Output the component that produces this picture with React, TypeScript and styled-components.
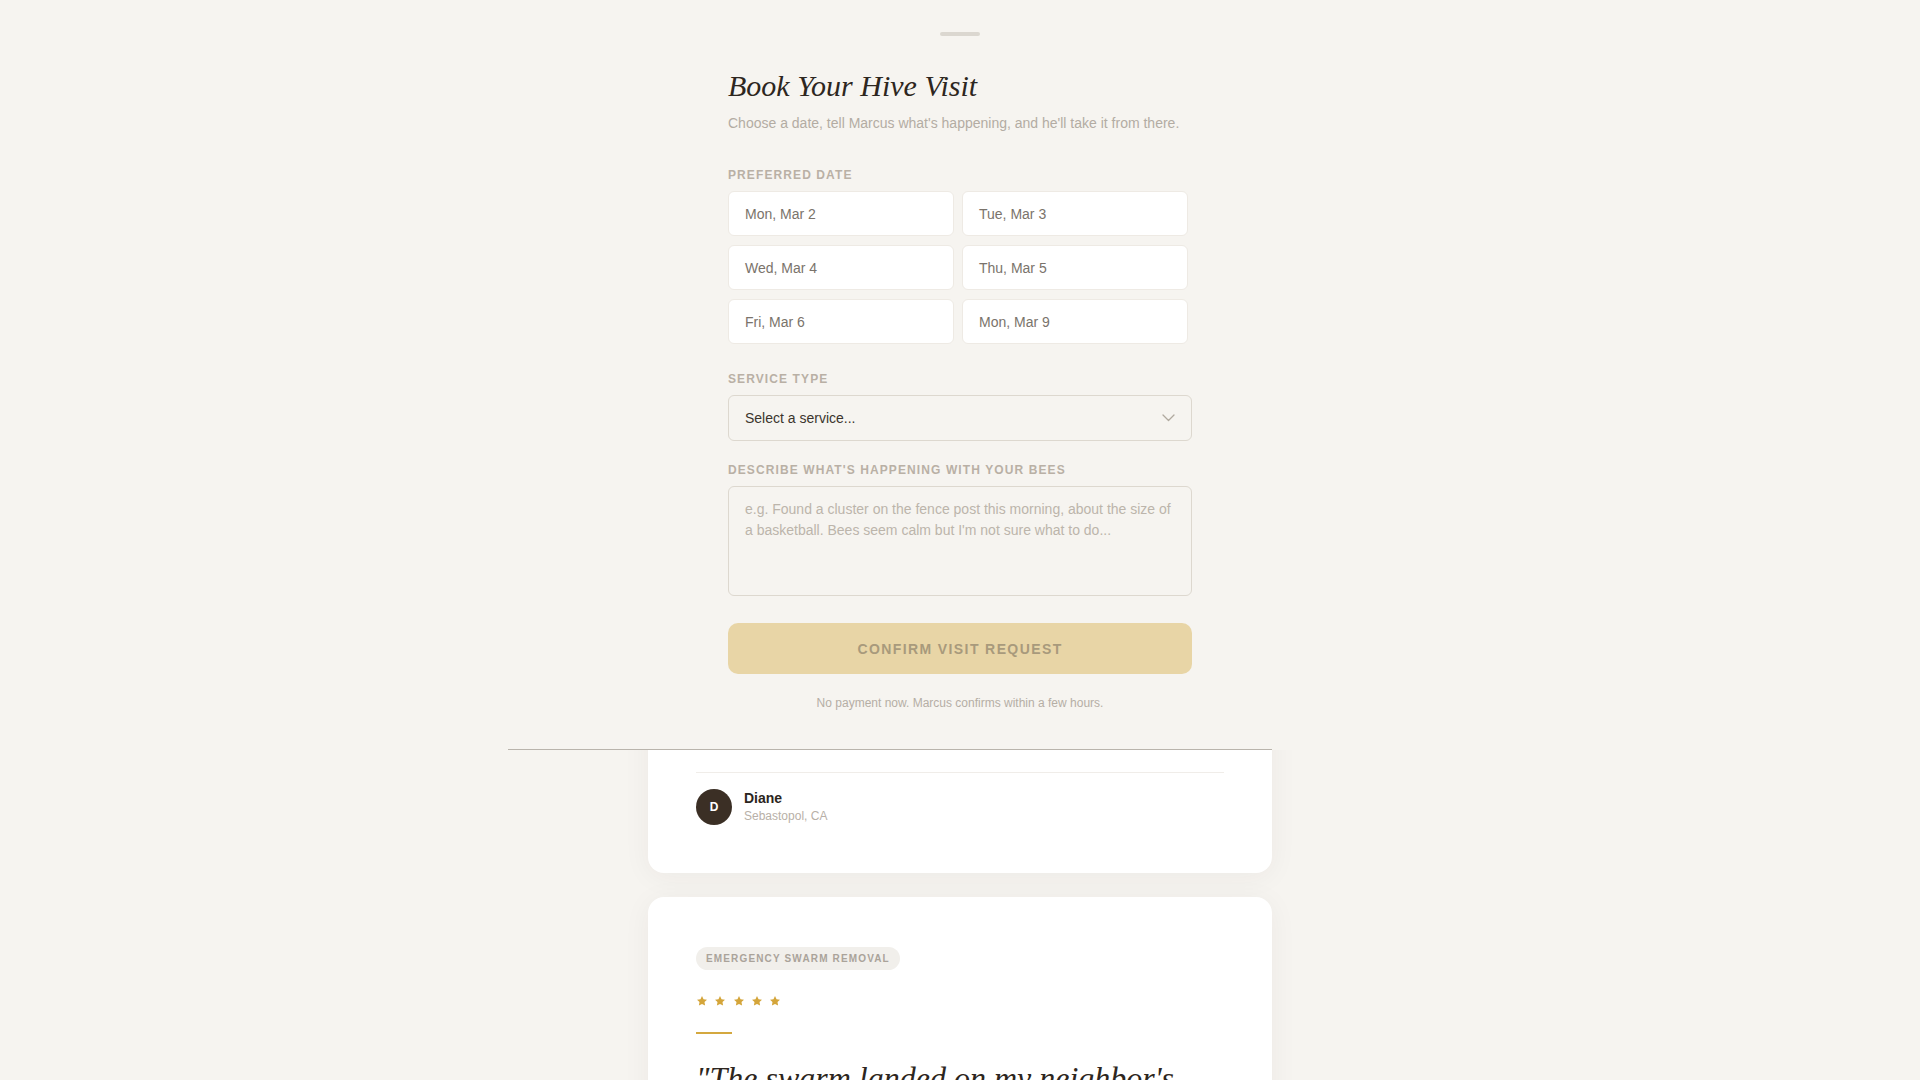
import React, { useState } from 'react';
import styled, { createGlobalStyle } from 'styled-components';

const GlobalStyle = createGlobalStyle`
	* { box-sizing: border-box; }
	html, body {
		margin: 0;
		padding: 0;
		background: #f6f4f0;
		font-family: 'Liberation Sans', Arial, sans-serif;
		color: #2d2620;
	}
	body { overflow: hidden; }
`;

const Page = styled.div`
	position: relative;
	width: 100%;
	height: 1080px;
	overflow: hidden;
`;

// review list behind the booking sheet
const ReviewsColumn = styled.div`
	width: 624px;
	margin: 0 auto;
	padding-top: 457px;
	display: flex;
	flex-direction: column;
	gap: 24px;
`;

const ReviewCard = styled.div`
	background: #ffffff;
	border-radius: 16px;
	padding: 50px 48px 48px;
	box-shadow: 0 4px 28px rgba(60, 45, 30, 0.05);
	display: flex;
	flex-direction: column;
	align-items: flex-start;
`;

const ServiceTag = styled.span`
	display: inline-flex;
	align-items: center;
	height: 23px;
	padding: 0 10px;
	border-radius: 12px;
	background: #f1efeb;
	color: #aaa39a;
	font-size: 10px;
	font-weight: 700;
	letter-spacing: 1.15px;
`;

const Stars = styled.div`
	display: flex;
	gap: 6.3px;
	margin-top: 25px;
	height: 12px;
	color: #d4a53a;
`;

const GoldRule = styled.div`
	width: 36px;
	height: 2px;
	background: #d4a83f;
	margin-top: 25px;
`;

const Quote = styled.p`
	margin: 22px 0 0;
	font-family: 'Liberation Serif', 'Times New Roman', serif;
	font-style: italic;
	font-size: 32px;
	line-height: 44px;
	color: #2d2620;
`;

const AuthorRow = styled.div`
	align-self: stretch;
	margin-top: 24px;
	padding-top: 16px;
	border-top: 1px solid #f0ede9;
	display: flex;
	align-items: center;
	gap: 12px;
`;

const Avatar = styled.div`
	width: 36px;
	height: 36px;
	border-radius: 50%;
	background: #3b2f25;
	color: #ffffff;
	display: flex;
	align-items: center;
	justify-content: center;
	font-size: 12px;
	font-weight: 700;
`;

const AuthorName = styled.div`
	font-size: 14px;
	font-weight: 700;
	line-height: 18px;
	color: #2b2520;
`;

const AuthorPlace = styled.div`
	font-size: 12px;
	line-height: 18px;
	color: #b8b0a7;
`;

// booking sheet laid over the reviews
const Sheet = styled.div`
	position: absolute;
	top: 0;
	left: 0;
	right: 0;
	height: 750px;
	background: #f6f4f0;
	padding-top: 32px;
	z-index: 10;

	&::after {
		content: '';
		position: absolute;
		bottom: 0;
		left: calc(50% - 452px);
		width: 764px;
		height: 1px;
		background: #b9b4ac;
	}
`;

const Handle = styled.div`
	width: 40px;
	height: 4px;
	border-radius: 2px;
	background: #dbd7d0;
	margin: 0 auto;
`;

const Form = styled.div`
	width: 464px;
	margin: 0 auto;
	display: flex;
	flex-direction: column;
`;

const Title = styled.h1`
	margin: 32px 0 0;
	font-family: 'Liberation Serif', 'Times New Roman', serif;
	font-style: italic;
	font-weight: 400;
	font-size: 30px;
	line-height: 36px;
	color: #2d2620;
`;

const Subtitle = styled.p`
	margin: 9px 0 0;
	font-size: 14px;
	line-height: 20px;
	color: #b3aca3;
`;

const FieldLabel = styled.div<{ $gap: number }>`
	margin-top: ${({ $gap }) => $gap}px;
	margin-bottom: 7px;
	font-size: 12px;
	line-height: 18px;
	font-weight: 700;
	letter-spacing: 1.1px;
	text-transform: uppercase;
	color: #b9b0a5;
`;

const DateGrid = styled.div`
	display: grid;
	grid-template-columns: repeat(2, 226px);
	column-gap: 8px;
	row-gap: 9px;
`;

const DateButton = styled.button<{ $active: boolean }>`
	height: 45px;
	padding: 0 16px;
	text-align: left;
	background: ${({ $active }) => ($active ? '#fbf4e2' : '#ffffff')};
	border: 1px solid ${({ $active }) => ($active ? '#d4a53a' : '#eeeae4')};
	border-radius: 6px;
	font-family: inherit;
	font-size: 14px;
	color: #7a736b;
	cursor: pointer;
`;

const SelectBox = styled.div`
	height: 46px;
	padding: 0 16px;
	display: flex;
	align-items: center;
	justify-content: space-between;
	border: 1px solid #ddd8cf;
	border-radius: 6px;
	background: #f6f4f0;
	font-size: 14px;
	color: #3b342d;
	cursor: pointer;
`;

const TextArea = styled.textarea`
	height: 110px;
	padding: 12px 16px;
	border: 1px solid #ddd8cf;
	border-radius: 6px;
	background: #f6f4f0;
	font-family: inherit;
	font-size: 14px;
	line-height: 21px;
	color: #3b342d;
	resize: none;
	outline: none;

	&::placeholder {
		color: #bcb5ab;
	}
`;

const ConfirmButton = styled.button`
	margin-top: 27px;
	height: 51px;
	border: none;
	border-radius: 10px;
	background: #e8d5a6;
	color: #a89a7c;
	font-family: inherit;
	font-size: 14px;
	font-weight: 700;
	letter-spacing: 1.4px;
	cursor: not-allowed;
`;

const Note = styled.p`
	margin: 21px 0 0;
	text-align: center;
	font-size: 12px;
	line-height: 16px;
	color: #b5aea5;
`;

const StarIcon = () => (
	<svg width="12" height="12" viewBox="0 0 24 24" fill="currentColor">
		<polygon points="12,2 15.09,8.26 22,9.27 17,14.14 18.18,21.02 12,17.77 5.82,21.02 7,14.14 2,9.27 8.91,8.26" />
	</svg>
);

const Chevron = () => (
	<svg width="13" height="8" viewBox="0 0 13 8" fill="none">
		<polyline points="1,1 6.5,6.5 12,1" stroke="#b0a99f" strokeWidth="1.3" strokeLinecap="round" strokeLinejoin="round" />
	</svg>
);

const dates = ['Mon, Mar 2', 'Tue, Mar 3', 'Wed, Mar 4', 'Thu, Mar 5', 'Fri, Mar 6', 'Mon, Mar 9'];

const reviews = [
	{
		tag: 'Hive Inspection',
		quote: '"Marcus walked me through every frame and explained exactly what the colony needed before winter."',
		name: 'Diane',
		initial: 'D',
		place: 'Sebastopol, CA',
	},
	{
		tag: 'Emergency Swarm Removal',
		quote: '"The swarm landed on my neighbor\'s fence and Marcus had them boxed up before lunch. Calm, careful, and kind."',
		name: 'Tom',
		initial: 'T',
		place: 'Petaluma, CA',
	},
];

const App = () => {
	const [date, setDate] = useState<string | null>(null);

	return (
		<>
			<GlobalStyle />
			<Page>
				<ReviewsColumn>
					{reviews.map(r => (
						<ReviewCard key={r.name}>
							<ServiceTag>{r.tag.toUpperCase()}</ServiceTag>
							<Stars>
								{[0, 1, 2, 3, 4].map(i => (
									<StarIcon key={i} />
								))}
							</Stars>
							<GoldRule />
							<Quote>{r.quote}</Quote>
							<AuthorRow>
								<Avatar>{r.initial}</Avatar>
								<div>
									<AuthorName>{r.name}</AuthorName>
									<AuthorPlace>{r.place}</AuthorPlace>
								</div>
							</AuthorRow>
						</ReviewCard>
					))}
				</ReviewsColumn>

				<Sheet>
					<Handle />
					<Form>
						<Title>Book Your Hive Visit</Title>
						<Subtitle>Choose a date, tell Marcus what's happening, and he'll take it from there.</Subtitle>

						<FieldLabel $gap={33}>Preferred Date</FieldLabel>
						<DateGrid>
							{dates.map(d => (
								<DateButton key={d} $active={date === d} onClick={() => setDate(d)}>
									{d}
								</DateButton>
							))}
						</DateGrid>

						<FieldLabel $gap={26}>Service Type</FieldLabel>
						<SelectBox>
							<span>Select a service...</span>
							<Chevron />
						</SelectBox>

						<FieldLabel $gap={20}>Describe what's happening with your bees</FieldLabel>
						<TextArea placeholder="e.g. Found a cluster on the fence post this morning, about the size of a basketball. Bees seem calm but I'm not sure what to do..." />

						<ConfirmButton disabled>CONFIRM VISIT REQUEST</ConfirmButton>
						<Note>No payment now. Marcus confirms within a few hours.</Note>
					</Form>
				</Sheet>
			</Page>
		</>
	);
};

export default App;
